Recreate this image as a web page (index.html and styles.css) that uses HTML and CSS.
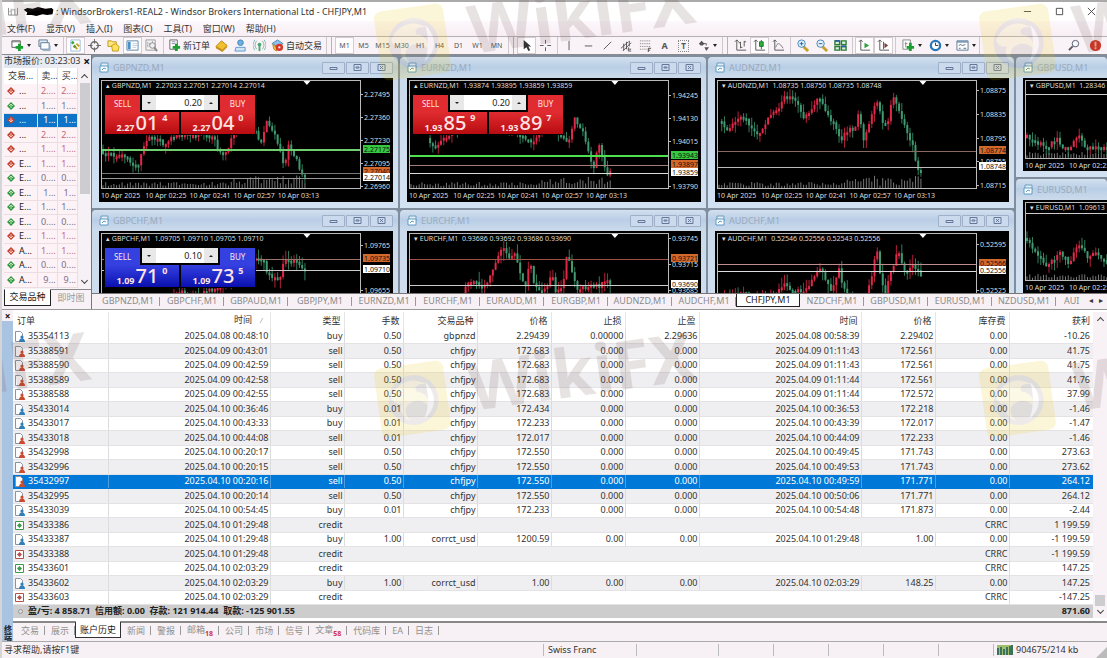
FILE: index.html
```html
<!DOCTYPE html>
<html lang="zh-CN">
<head>
<meta charset="utf-8">
<meta name="viewport" content="width=device-width, initial-scale=1">
<title>WindsorBrokers1-REAL2 - Windsor Brokers International Ltd - CHFJPY,M1</title>
<link rel="stylesheet" href="styles.css">
</head>
<body>
<div class="app">
  <header class="titlebar">
    <svg class="app-logo" viewBox="0 0 12 10" aria-hidden="true"><path d="M1 1v8h10V1M4 2v7M8 2v7M2 5h1M6 2v2" fill="none" stroke="#888"/></svg>
    <svg class="redacted" viewBox="0 0 34 10" aria-hidden="true"><path d="M0 3 4 1 10 2 16 0 24 2 31 1 33 3 32 8 26 9 21 8 14 10 9 9 3 9 4 6Z"/></svg>
    <h1 class="app-title">: WindsorBrokers1-REAL2 - Windsor Brokers International Ltd - CHFJPY,M1</h1>
    <div class="caption-buttons">
      <button aria-label="最小化"><svg viewBox="0 0 10 10"><path d="M1 5h8"/></svg></button>
      <button aria-label="最大化"><svg viewBox="0 0 10 10"><path d="M1.5 1.5h7v7h-7z"/></svg></button>
      <button aria-label="关闭"><svg viewBox="0 0 10 10"><path d="M1 1l8 8M9 1l-8 8"/></svg></button>
    </div>
  </header>

  <nav class="menubar">
    <button>文件(F)</button><button>显示(V)</button><button>插入(I)</button><button>图表(C)</button><button>工具(T)</button><button>窗口(W)</button><button>帮助(H)</button>
  </nav>

  <div class="toolbar">
    <div class="tools">
      <button class="tool has-menu" aria-label="新图表"><svg viewBox="0 0 14 14"><path d="M1 2h9v7H1z" fill="#fff" stroke="#555"/><path d="M1 3h9" stroke="#777"/><path d="M9 5v8M5 9h8" stroke="#18a030" stroke-width="3"/></svg></button>
      <button class="tool has-menu" aria-label="配置文件"><svg viewBox="0 0 14 14"><path d="M1 1h9v7H1z" fill="#dcebf5" stroke="#678"/><path d="M3 4h9v7H3z" fill="#fff" stroke="#579"/><path d="M5 12.500h8V7" fill="none" stroke="#8ab"/></svg></button>
    </div>
    <div class="tools">
      <button class="tool pressed" aria-label="市场报价"><svg viewBox="0 0 14 14"><path d="M2 1h10v12H2z" fill="#fff" stroke="#9bd"/><path d="M4 2l2 2-2 2-2-2z" fill="#38a545"/><path d="M8 5l3 3M9 11l-3-3" stroke="#c79c20" stroke-width="2"/><path d="M6 6l2 2-2 2-2-2z" fill="#5a9a30"/></svg></button>
      <button class="tool" aria-label="数据窗口"><svg viewBox="0 0 14 14"><circle cx="7" cy="7" r="4" fill="none" stroke="#666" stroke-width="1.500"/><path d="M7 0v5M7 9v5M0 7h5M9 7h5" stroke="#666"/></svg></button>
      <button class="tool" aria-label="导航"><svg viewBox="0 0 14 14"><path d="M1 2h4l1 1h4v5H1z" fill="#ffe680" stroke="#c09a18"/><path d="M5 7l4-2 4 3-1 5H6z" fill="#ffe25a" stroke="#c09a18"/></svg></button>
      <button class="tool pressed" aria-label="终端"><svg viewBox="0 0 14 14"><path d="M1 2h12v10H1z" fill="#fff" stroke="#5b84a8"/><path d="M2 3h3v8H2z" fill="#4a90c8"/><path d="M7 5h5M7 7h5M7 9h4" stroke="#bcd"/></svg></button>
      <button class="tool" aria-label="策略测试"><svg viewBox="0 0 14 14"><path d="M1 1h10v11H1z" fill="#f5f5f5" stroke="#999"/><path d="M3 3v6M5 4v4M8 2v3" stroke="#aaa"/><circle cx="8" cy="7" r="3" fill="#eee" stroke="#888"/><path d="M10 9l3 4" stroke="#888" stroke-width="2"/></svg></button>
    </div>
    <div class="tools">
      <button class="tool labelled order"><svg viewBox="0 0 14 14"><path d="M2 1h8v10H2z" fill="#fff" stroke="#666"/><path d="M4 3h4M4 5h4" stroke="#88a"/><path d="M9 5v8M5 9h8" stroke="#18a030" stroke-width="3"/></svg>新订单</button>
      <button class="tool" aria-label="MetaEditor"><svg viewBox="0 0 14 14"><path d="M1 8l6-6 6 5-5 5z" fill="#f0c030" stroke="#b98510"/><path d="M1 8v2l7 4 5-5V7l-5 5z" fill="#c98d18"/></svg></button>
      <button class="tool" aria-label="选项"><svg viewBox="0 0 14 14"><circle cx="7" cy="4" r="3" fill="#6fb1e0" stroke="#3c7fb5"/><path d="M2 9h10v4H1z" fill="#cfe4f4" stroke="#5b9bcc"/></svg></button>
      <button class="tool" aria-label="信号"><svg viewBox="0 0 14 14"><path d="M4 2a7 7 0 0 0 0 9M10 2a7 7 0 0 1 0 9M2 1a9 9 0 0 0 0 11M12 1a9 9 0 0 1 0 11" fill="none" stroke="#7db5ae"/><circle cx="7" cy="6" r="2" fill="#4aa870"/><path d="M7 7v6" stroke="#4aa870" stroke-width="2"/></svg></button>
      <button class="tool labelled auto"><svg viewBox="0 0 14 14"><path d="M1 5l6-4 6 4-6 3z" fill="#8ec1e8" stroke="#4a86b5"/><path d="M2 6l4 3v4l-3-2z" fill="#f0c04a" stroke="#b98a20"/><circle cx="9" cy="9" r="4" fill="#d8382c"/><path d="M8 8h2v2H8z" fill="#fff"/></svg>自动交易</button>
    </div>
    <div class="tools double periods">
      <button class="tool pressed">M1</button><button class="tool">M5</button><button class="tool">M15</button><button class="tool">M30</button><button class="tool">H1</button><button class="tool">H4</button><button class="tool">D1</button><button class="tool">W1</button><button class="tool">MN</button>
    </div>
    <div class="tools double">
      <button class="tool pressed" aria-label="光标"><svg viewBox="0 0 14 14"><path d="M4 1v10l3-2 2 4 2-1-2-4h3z" fill="#333"/></svg></button>
      <button class="tool" aria-label="十字线"><svg viewBox="0 0 14 14"><path d="M7 1v4M7 9v4M1 7h4M9 7h4" stroke="#555"/></svg></button>
    </div>
    <div class="tools">
      <button class="tool" aria-label="垂直线"><svg viewBox="0 0 14 14"><path d="M6.500 2v10" stroke="#555"/></svg></button>
      <button class="tool" aria-label="水平线"><svg viewBox="0 0 14 14"><path d="M3 7.500h8" stroke="#555"/></svg></button>
      <button class="tool" aria-label="趋势线"><svg viewBox="0 0 14 14"><path d="M3 11l8-8" stroke="#555"/></svg></button>
      <button class="tool" aria-label="通道"><svg viewBox="0 0 14 14"><path d="M1 10l8-7M3 13l9-9M4 5v7M7 3v8M10 2v6M9 11h3M9 13h3M9 9v4" stroke="#555" fill="none"/></svg></button>
      <button class="tool" aria-label="斐波纳契"><svg viewBox="0 0 14 14"><path d="M1 2h12M1 5h12M1 8h12M1 11h7" stroke="#777" stroke-dasharray="1 1"/><path d="M10 10v4M10 10h3M10 12h2" stroke="#444"/></svg></button>
      <button class="tool glyph" aria-label="文字">A</button>
      <button class="tool glyph boxed" aria-label="文字标签"><span>T</span></button>
      <button class="tool has-menu" aria-label="箭头"><svg viewBox="0 0 14 14"><path d="M2 5l3-3 3 3-2 2H4zM8 9l2 4 3-4z" fill="#555"/><path d="M7 5h3v2" stroke="#555" fill="none"/></svg></button>
    </div>
    <div class="tools double">
      <button class="tool" aria-label="柱状图"><svg viewBox="0 0 14 14"><path d="M3 1v11h10M1 3l2-2 2 2M7 3v7M7 4H5M7 9h2M11 2v6M11 3h2" fill="none" stroke="#555"/></svg></button>
      <button class="tool pressed" aria-label="蜡烛图"><svg viewBox="0 0 14 14"><path d="M3 1v11h10M1 3l2-2 2 2M9 1v10" fill="none" stroke="#555"/><path d="M7 3h4v5H7z" fill="#2fae3f" stroke="#1a7a28"/></svg></button>
      <button class="tool" aria-label="折线图"><svg viewBox="0 0 14 14"><path d="M3 1v11h10M1 3l2-2 2 2" fill="none" stroke="#555"/><path d="M4 9c2-6 4-5 8 1" fill="none" stroke="#777"/></svg></button>
    </div>
    <div class="tools">
      <button class="tool" aria-label="放大"><svg viewBox="0 0 14 14"><path d="M8 8l5 5" stroke="#c8a028" stroke-width="3"/><circle cx="6" cy="5" r="4" fill="#e2f1fb" stroke="#4284b8"/><path d="M4 5h4M6 3v4" stroke="#28659a"/></svg></button>
      <button class="tool" aria-label="缩小"><svg viewBox="0 0 14 14"><path d="M8 8l5 5" stroke="#c8a028" stroke-width="3"/><circle cx="6" cy="5" r="4" fill="#e2f1fb" stroke="#4284b8"/><path d="M4 5h4" stroke="#28659a"/></svg></button>
      <button class="tool" aria-label="平铺窗口"><svg viewBox="0 0 14 14"><path d="M1 2h5v4H1zM8 2h5v4H8zM1 8h5v4H1zM8 8h5v4H8z" fill="#d8f0d8" stroke="#2c7a38" stroke-width="1.500"/><path d="M1 2h5M8 8h5" stroke="#2560a0" stroke-width="2"/></svg></button>
    </div>
    <div class="tools">
      <button class="tool pressed" aria-label="自动滚动"><svg viewBox="0 0 14 14"><path d="M3 1v11h10M1 3l2-2 2 2" fill="none" stroke="#555"/><path d="M7 4l5 3-5 3z" fill="#2ea043"/></svg></button>
      <button class="tool pressed" aria-label="图表平移"><svg viewBox="0 0 14 14"><path d="M3 1v11h10M1 3l2-2 2 2M7 3v8" fill="none" stroke="#555"/><path d="M8 4l4 3-4 3z" fill="#7a4040"/></svg></button>
    </div>
    <div class="tools last">
      <button class="tool has-menu" aria-label="指标"><svg viewBox="0 0 14 14"><path d="M1 1h8v10H1z" fill="#fff" stroke="#888"/><path d="M4 3v6M3 5h3" stroke="#888"/><path d="M9 4v9M5 9h8" stroke="#18a030" stroke-width="3"/></svg></button>
      <button class="tool has-menu" aria-label="时间周期"><svg viewBox="0 0 14 14"><circle cx="7" cy="7" r="5" fill="#fff" stroke="#2a78b8" stroke-width="2.500"/><path d="M7 4v3h3" fill="none" stroke="#333"/></svg></button>
      <button class="tool has-menu" aria-label="模板"><svg viewBox="0 0 14 14"><path d="M1 2h12v10H1z" fill="#fff" stroke="#5b7b96"/><path d="M1 3h12" stroke="#7a9cba" stroke-width="2"/><path d="M3 7l2-1 2 1 3-1M3 10h2M8 10h3" fill="none" stroke="#567"/></svg></button>
    </div>
    <div class="tools corner">
      <button class="tool" aria-label="搜索"><svg viewBox="0 0 14 14"><circle cx="8" cy="5" r="3.500" fill="#f4f8ff" stroke="#556"/><path d="M5 8l-4 4" stroke="#556" stroke-width="2"/></svg></button>
      <button class="tool" aria-label="通知"><svg viewBox="0 0 14 14"><circle cx="7" cy="7" r="6" fill="#d63420"/><path d="M7 3v5M7 9v2" stroke="#ffb0a0" stroke-width="2"/></svg></button>
    </div>
  </div>

  <main class="upper">
    <section class="market">
      <header class="market-head"><h2>市场报价: 03:23:03</h2><button class="close" aria-label="关闭">×</button></header>
      <div class="market-body">
        <table class="quotes">
          <thead><tr><th>交易...</th><th>卖...</th><th>买...</th></tr></thead>
          <tbody id="quotes"></tbody>
        </table>
        <div class="scroll"><span class="up"></span><span class="thumb long"></span><span class="down"></span></div>
      </div>
      <div class="market-tabs"><button class="active">交易品种</button><button>即时图</button></div>
    </section>

    <section class="charts">
      <div class="workspace" id="workspace"></div>
      <div class="chart-tabs" id="chart-tabs"></div>
    </section>
  </main>

  <section class="terminal">
    <div class="terminal-side"><button class="close" aria-label="关闭">×</button><span class="side-name">终端</span></div>
    <div class="terminal-main">
      <div class="history-wrap">
        <table class="history">
          <colgroup><col class="c-order"><col class="c-time"><col class="c-price"><col class="c-lots"><col class="c-price"><col class="c-price"><col class="c-price"><col class="c-price"><col class="c-time"><col class="c-price"><col class="c-price"><col class="c-profit"></colgroup>
          <thead><tr><th>订单</th><th class="sorted">时间<i>/</i></th><th>类型</th><th>手数</th><th>交易品种</th><th>价格</th><th>止损</th><th>止盈</th><th>时间</th><th>价格</th><th>库存费</th><th>获利</th></tr></thead>
          <tbody id="history"></tbody>
          <tfoot><tr><td colspan="11"><span class="bullet"></span>盈/亏: 4 858.71&nbsp; 信用额: 0.00&nbsp; 存款: 121 914.44&nbsp; 取款: -125 901.55</td><td>871.60</td></tr></tfoot>
        </table>
        <div class="scroll"><span class="up"></span><span class="track"></span><span class="thumb"></span><span class="down"></span></div>
      </div>
      <div class="terminal-tabs">
        <button>交易</button><button>展示</button><button class="active">账户历史</button><button>新闻</button><button>警报</button><button>邮箱<sub>18</sub></button><button>公司</button><button>市场</button><button>信号</button><button>文章<sub>58</sub></button><button>代码库</button><button>EA</button><button>日志</button>
      </div>
    </div>
  </section>

  <footer class="status">
    <span class="help">寻求帮助,请按F1键</span><span class="profile">Swiss Franc</span><span class="date"></span><span></span><span></span><span></span><span></span><span></span>
    <span class="traffic"><svg viewBox="0 0 16 10" aria-hidden="true"><path d="M0 0h16v10H0z" fill="#9fbf6a"/><path d="M1 3v7M4 2v8M7 4v6M10 2v8M13 1v9M15 0v10" stroke="#1d5a58" stroke-width="1.500"/></svg>904675/214 kb</span>
    <svg class="grip" viewBox="0 0 12 12" aria-hidden="true"><path d="M12 0v12H0z" fill="#bbb"/></svg>
  </footer>

  <div class="watermarks" id="watermarks" aria-hidden="true"></div>
</div>
<script src="app.js"></script>
</body>
</html>
```

FILE: styles.css
```css
* { box-sizing: border-box; }

body {
  margin: 0;
  font: 9px/12px "Noto Sans", "Noto Sans CJK SC", sans-serif;
  color: #333;
  background: #f7f0f4;
}

button, input {
  font: inherit;
  color: inherit;
  margin: 0;
  padding: 0;
  border: 0;
  background: none;
}

h1, h2 { margin: 0; font: inherit; }
svg { display: block; }

.app {
  position: relative;
  display: flex;
  flex-direction: column;
  height: 100vh;
  min-height: 600px;
  overflow: hidden;
  border-left: 2px solid #d5d5d8;
}

/* Title bar and menu */
.titlebar {
  display: flex;
  align-items: center;
  height: 21px;
  padding-left: 5px;
  border-top: 2px solid #aaa;
  background: #fff;
}
.app-logo { width: 12px; height: 9px; }
.redacted { width: 34px; height: 9px; margin-left: 3px; }
.app-title { color: #333; white-space: nowrap; }
.caption-buttons { display: flex; margin-left: auto; }
.caption-buttons button { width: 32px; height: 16px; display: grid; place-items: center; }
.caption-buttons svg { width: 9px; height: 9px; fill: none; stroke: #444; }

.menubar {
  display: flex;
  gap: 11px;
  height: 15px;
  padding-left: 5px;
  background: linear-gradient(#fdf8fb, #f7eef3);
  color: #333;
}

/* Toolbar */
.toolbar {
  display: flex;
  height: 19px;
  padding-left: 5px;
  border-top: 1px solid #b5b0b4;
  border-bottom: 1px solid #8a8a8e;
  background: #f9f2f6;
}
.tools { display: flex; align-items: center; padding-right: 2px; margin-right: 2px; border-right: 1px solid #cfc8cc; }
.tools.double { padding-left: 3px; margin-left: 2px; border-left: 1px solid #b9b2b6; }
.tools.last { padding-right: 0; }
.tools.corner { margin: 0 2px 0 auto; border: 0; padding: 0; gap: 2px; }
.tool { display: flex; align-items: center; justify-content: center; width: 19px; height: 17px; white-space: nowrap; }
.tool svg { width: 13px; height: 13px; }
.tool.pressed { border: 1px solid #d4ccd2; background: #fffcfe; }
.tool.has-menu { width: 27px; gap: 3px; }
.tool.has-menu::after { content: ""; border: 2px solid transparent; border-top: 3px solid #222; border-bottom: 0; }
.tool.labelled { gap: 2px; }
.tool.order { width: 46px; }
.tool.auto { width: 55px; }
.periods .tool { font-size: 7px; color: #555; }
.tool.glyph { font-weight: 700; color: #555; }
.tool.boxed span { border: 1px dotted #888; width: 11px; line-height: 10px; font-size: 8px; }

/* Market watch */
.upper { display: flex; flex: 1; min-height: 0; }
.market {
  display: flex;
  flex-direction: column;
  width: 90px;
  padding-left: 2px;
  border-right: 1px solid #777;
  background: #f8f2f6;
}
.market-head { display: flex; justify-content: space-between; height: 13px; white-space: nowrap; background: linear-gradient(90deg, #dfe6f0, #f3f0f5); }
.close { font-size: 12px; line-height: 12px; font-weight: 700; padding: 0 1px; color: #111; }
.market-body { display: flex; background: #fdf2f6; }
.quotes { flex: 1; table-layout: fixed; width: 74px; border-collapse: collapse; }
.quotes th { height: 16px; padding: 0 0 0 4px; font-weight: 400; text-align: left; background: #fff; border-right: 1px solid #e2dde0; overflow: hidden; white-space: nowrap; }
.quotes th:first-child { width: 33px; }
.quotes td { padding: 0 1px 0 0; height: 14px; line-height: 12px; text-align: right; white-space: nowrap; border-right: 1px solid #ecdde3; border-bottom: 1px solid #ecdde3; color: #77708a; }
.quotes tr:nth-child(even) td { height: 15px; }
.quotes td:first-child { text-align: left; color: #222; padding-left: 3px; }
.quotes td svg { display: inline-block; width: 8px; height: 8px; margin-right: 4px; vertical-align: -1px; }
.quotes .down td { color: #c4657a; }
.quotes .down td:first-child { color: #222; }
.quotes tr.selected td, .quotes tr.selected td:first-child { color: #fff; background: #0f74c8; }
.scroll { display: flex; flex-direction: column; align-items: center; width: 13px; background: #f6f1f4; }
.scroll .up, .scroll .down { width: 5px; height: 5px; border: 1px solid #444; border-width: 1px 0 0 1px; transform: rotate(45deg); margin: 7px 0 3px; flex: none; }
.scroll .down { transform: rotate(225deg); margin: 2px 0 5px; }
.scroll .thumb { width: 10px; height: 11px; background: #cdcdcf; }
.scroll .thumb.long { flex: 1; margin-bottom: 94px; }
.market-body .scroll { position: relative; }
.market-body .scroll .down { position: absolute; bottom: 0; }
.market-tabs { display: flex; height: 17px; border-top: 1px solid #888; margin-top: 1px; }
.market-tabs button { flex: 1; color: #999; }
.market-tabs .active { flex: none; width: 47px; margin-top: -1px; color: #222; background: #fff; border: 1px solid #222; border-top-color: #fff; }

/* Chart workspace */
.charts { display: flex; flex-direction: column; flex: 1; min-width: 0; }
.workspace {
  flex: 1;
  min-height: 0;
  overflow: hidden;
  display: grid;
  grid-template-columns: repeat(3, minmax(0, 306fr)) minmax(0, 91fr);
  gap: 2px;
  padding-top: 2px;
  align-content: start;
  align-items: start;
  background: #7f8d9c;
}
.col { display: flex; flex-direction: column; gap: 2px; }
.win {
  padding: 0 5px 6px 7px;
  border-radius: 4px 4px 0 0;
  background: linear-gradient(#d3e0ef, #b9cee6 10px, #cadaeb 20px, #d3e2f2);
}
.win-head { display: flex; align-items: center; height: 21px; color: #9aa9bc; overflow: hidden; }
.win-head > svg { width: 11px; height: 11px; margin-right: 3px; flex: none; }
.win-head h3 { margin: 0; font: inherit; white-space: nowrap; }
.win-head div { display: flex; gap: 1px; margin-left: auto; }
.win-head button { width: 23px; height: 12px; display: grid; place-items: center; border: 1px solid #9fb0c8; border-radius: 1px; background: #cbdaec; }
.win-head button svg { width: 9px; height: 7px; fill: none; stroke: #66789a; }
.screen { display: grid; grid-template-columns: minmax(0, 1fr) 32px; height: 124px; padding: 2px 0 0 2px; background: #000; color: #ddd; font-size: 7px; line-height: 10px; overflow: hidden; }
.narrow .screen { grid-template-columns: minmax(0, 1fr); height: 93px; }
.narrow .win { padding-right: 0; }
.plot { position: relative; height: 109px; border: 1px solid #bbb; overflow: hidden; }
.narrow .plot { height: 79px; border-right: 0; }
.plot > svg { width: 100%; height: 100%; }
.narrow .plot > svg { width: 260px; }
.axis { width: 32px; height: 109px; overflow: visible; }
.axis text { font-size: 7px; fill: #ddd; }
.axis .on { fill: #111; }
.times { display: flex; height: 13px; padding-top: 2px; overflow: hidden; }
.times span { flex: 0 0 17%; white-space: nowrap; }
.narrow .times span { flex: 0 0 44px; }
.ohlc { position: absolute; left: 4px; top: 0; white-space: pre; }

/* One-click trading panel laid over the plot */
.deal { position: absolute; left: 2px; top: 13px; width: 152px; padding: 1px; background: #000; color: #ffe4e4; }
.deal-top { display: flex; height: 17px; }
.deal-top > button { flex: none; width: 35px; font-size: 8px; background: var(--hi); }
.stepper { display: flex; flex: 1; min-width: 0; height: 15px; margin: 0 2px; background: #fff; color: #222; }
.stepper button { flex: none; width: 14px; background: #e8e8e8; display: grid; place-items: center; }
.stepper button::after { content: ""; border: 2px solid transparent; border-top: 2px solid #222; border-bottom: 0; }
.stepper button:last-child::after { transform: rotate(180deg); }
.stepper input { flex: 1; width: 0; min-width: 0; text-align: right; font-size: 9px; padding-right: 2px; }
.deal-bottom { display: flex; gap: 2px; }
.deal-bottom button { flex: 1; height: 22px; display: flex; align-items: flex-end; justify-content: center; gap: 1px; font-weight: 700; font-size: 9px; line-height: 12px; background: linear-gradient(var(--hi), var(--lo)); }
.deal-bottom b { font-size: 20px; line-height: 22px; font-weight: 500; }
.deal-bottom sup { align-self: flex-start; font-size: 9px; line-height: 11px; margin-left: 3px; }
.deal.red { --hi: #e02c30; --lo: #b80c10; }
.deal.blue { --hi: #3540e0; --lo: #0a10b0; }

.chart-tabs { display: flex; height: 16px; padding: 0 26px 0 4px; border-top: 1px solid #777; background: #f7f1f5; position: relative; }
.chart-tabs button { flex: 0 0 64px; height: 13px; color: #8b8b8b; white-space: nowrap; overflow: hidden; background: linear-gradient(#999, #999) right 3px / 1px 9px no-repeat; }
.chart-tabs .active { color: #222; background: #fff; border: 1px solid #222; border-top: 0; }
.chart-tabs button:last-of-type { flex: 1 1 0; text-align: left; padding-left: 8px; background: none; }
.chart-tabs span { position: absolute; right: 4px; top: 0; color: #333; font-size: 8px; word-spacing: 4px; }

/* Terminal */
.terminal { display: flex; border-top: 1px solid #999; background: #fff; }
.terminal-side { display: flex; flex-direction: column; justify-content: space-between; align-items: center; width: 11px; background: linear-gradient(#f7f0f4 11px, #a9c3e3 11px); }
.terminal-side .close { padding: 0; font-size: 10px; }
.side-name { writing-mode: vertical-rl; font-size: 8px; line-height: 10px; color: #123; font-weight: 700; }
.terminal-main { flex: 1; min-width: 0; }
.history-wrap { display: flex; padding-top: 2px; }
.history { flex: 1; width: 100%; table-layout: fixed; border-collapse: collapse; }
.c-order { width: 95px; }
.c-time { width: 162px; }
.c-price { width: 74px; }
.c-lots { width: 59px; }
.c-profit { width: 84px; }
.history th { height: 17px; padding: 0 3px 0 0; font-weight: 400; text-align: right; border-right: 1px solid #e6e6e6; }
.history th:first-child { text-align: left; padding-left: 4px; }
.history th i { margin: 0 4px 0 8px; color: #999; font-size: 7px; }
.history td { height: 14px; padding: 0 1px 0 0; line-height: 12px; text-align: right; white-space: nowrap; border-right: 1px solid #dcdcdc; border-bottom: 1px solid #e4e2e4; }
.history tbody td:last-child, .history th:last-child { border-right: 0; padding-right: 3px; }
.history td:first-child { text-align: left; padding-left: 2px; }
.history tbody tr:nth-child(even) td { height: 15px; background: #efeef0; }
.history .credit td:nth-child(n+3):nth-child(-n+10) { border-right-color: transparent; }
.history td svg { display: inline-block; width: 10px; height: 11px; margin-right: 3px; vertical-align: -3px; }
.history tbody tr.selected td { background: #0078d7; color: #fff; border-bottom-color: #0078d7; border-right-color: #4ba0e4; }
.history tfoot td { background: #cdcdcd; border: 0; font-weight: 700; color: #222; padding-right: 3px; }
.history tfoot td:first-child { padding-left: 5px; }
.bullet { display: inline-block; width: 5px; height: 5px; margin-right: 5px; border: 1px solid #999; border-radius: 50%; background: #ddd; }
.history-wrap .scroll { width: 15px; background: #f8f2f6; }
.history-wrap .scroll .up { margin-top: 6px; }
.history-wrap .track { flex: 1; }
.terminal-tabs { display: flex; height: 20px; margin-top: 3px; border-top: 2px solid #888; background: #f7f0f4; padding-left: 2px; }
.terminal-tabs button { padding: 0 6px; height: 15px; color: #909090; background: linear-gradient(#999, #999) right 3px / 1px 9px no-repeat; }
.terminal-tabs .active { margin-top: -2px; height: 17px; color: #222; background: #fff; border: 1px solid #333; border-top-color: #fff; padding: 0 4px; }
.terminal-tabs sub { font-size: 7px; line-height: 7px; font-weight: 700; color: #d03048; }

/* Status bar */
.status { display: flex; align-items: center; height: 17px; padding-left: 2px; border-top: 1px solid #aaa; background: #f7f0f4; }
.status > span { flex: 0 0 55px; height: 12px; border-right: 1px solid #bbb; white-space: nowrap; }
.status .help { flex: 1; }
.status .profile { flex-basis: 93px; padding-left: 4px; }
.status .date { flex-basis: 82px; }
.status .traffic { display: flex; align-items: center; gap: 3px; flex-basis: 102px; padding-left: 3px; border: 0; }
.traffic svg { width: 16px; height: 10px; }
.grip { width: 11px; height: 11px; align-self: flex-end; }

/* Brand watermark repeated across the window */
.watermarks { position: absolute; inset: 0; overflow: hidden; pointer-events: none; }
.mark { position: absolute; display: flex; align-items: center; gap: 22px; transform: rotate(-8deg); transform-origin: left center; opacity: .15; font: 700 67px/80px "Noto Sans", sans-serif; color: #6b4a4a; }
.mark svg { width: 70px; height: 70px; margin-top: 12px; }
```

FILE: app.js
```js
const $ = (id) => document.getElementById(id);

/* ---- Market watch ---- */
const quotes = [
  ["down", "...", "2....", "2...."], ["up", "...", "1....", "1...."], ["down selected", "...", "1...", "1..."],
  ["down", "...", "2....", "2...."], ["down", "...", "1....", "1...."], ["down", "E...", "1....", "1...."],
  ["up", "E...", "0....", "0...."], ["up", "E...", "1...", "1..."], ["up", "E...", "1....", "1...."],
  ["up", "E...", "0....", "0...."], ["down", "E...", "1....", "1...."], ["down", "A...", "1....", "1...."],
  ["up", "A...", "0....", "0...."], ["up", "A...", "9...", "9..."]
];
$("quotes").innerHTML = quotes.map(([state, name, bid, ask]) => {
  const down = state.startsWith("down");
  const icon = `<svg viewBox="0 0 8 8"><path d="M4 0l4 4-4 4-4-4z" fill="${down ? "#c8402c" : "#2f9a3c"}"/><path d="${down ? "M4 2v3M2 4l2 2 2-2" : "M4 6V3M2 4l2-2 2 2"}" stroke="#fff" stroke-width=".7" fill="none"/></svg>`;
  return `<tr class="${state}"><td>${icon}${name}</td><td>${bid}</td><td>${ask}</td></tr>`;
}).join("");

/* ---- Charts ---- */
const O = "#d2692a", W = "#ffffff", G = "#35c840";
const charts = [
  { name: "GBPNZD,M1", ohlc: "2.27023 2.27051 2.27014 2.27014", open: true, seed: 3,
    path: [1,70,16,75,24,75,27,82,37,82,42,63,51,55,62,63,72,55,99,52,111,55,119,72,126,72,131,53,146,42,156,52,161,65,166,38,176,57,182,82,184,88,188,63,196,78,201,92,205,94],
    lines: [[69, "#6fcf6f", 2], [92, "#777", 1], [97, "#999", 1]],
    axis: [["2.27495", 14], ["2.27360", 37], ["2.27230", 60], ["2.27095", 83], ["2.26960", 106], ["2.27175", 69, G], ["2.27040", 91, O], ["2.27014", 97, W]],
    deal: ["red", "0.20", "2.27", "01", "4", "2.27", "04", "0"] },
  { name: "EURNZD,M1", ohlc: "1.93874 1.93895 1.93859 1.93859", open: true, seed: 8,
    path: [18,57,24,67,29,63,36,55,60,40,100,48,116,57,124,63,128,55,138,45,156,57,159,63,166,37,174,52,181,72,184,92,190,63,195,82,199,92,204,90],
    lines: [[75, "#4fe04f", 2], [84, "#a08078", 1], [92, "#ddd", 1]],
    axis: [["1.94245", 15], ["1.94130", 38], ["1.94015", 61], ["1.93790", 106], ["1.93943", 75, G], ["1.93897", 84, O], ["1.93859", 92, W]],
    deal: ["red", "0.20", "1.93", "85", "9", "1.93", "89", "7"] },
  { name: "AUDNZD,M1", ohlc: "1.08735 1.08750 1.08735 1.08748", seed: 5, tall: 8,
    path: [2,40,9,48,22,37,29,40,41,57,49,38,59,30,67,17,74,17,81,22,87,38,94,30,101,15,107,27,116,42,124,58,134,45,137,55,142,32,147,62,154,35,161,18,166,40,171,42,176,15,182,30,191,52,196,65,200,87,202,92,206,88],
    lines: [[70, "#8a6a60", 1], [86, "#bbb", 1]],
    axis: [["1.08875", 10], ["1.08835", 34], ["1.08795", 58], ["1.08755", 81], ["1.08715", 105], ["1.08774", 70, O], ["1.08748", 86, W]] },
  { name: "GBPCHF,M1", ohlc: "1.09705 1.09710 1.09705 1.09710", open: true, seed: 9, tall: 10, cut: true,
    path: [70,64,79,57,88,66,140,40,156,23,162,23,166,39,172,43,181,41,184,21,189,28,196,26,201,34,205,37],
    lines: [[25, "#a07468", 1], [36, "#ccc", 1]],
    axis: [["1.09765", 12], ["1.09655", 57], ["1.09735", 25, O], ["1.09710", 36, W]],
    deal: ["blue", "0.10", "1.09", "71", "0", "1.09", "73", "5"] },
  { name: "EURCHF,M1", ohlc: "0.93686 0.93692 0.93686 0.93690", seed: 4, tall: 10, cut: true,
    path: [54,62,58,46,63,46,71,54,81,43,88,26,94,13,99,26,106,19,111,38,116,53,121,29,126,53,131,58,139,54,143,34,146,58,154,53,158,21,163,36,168,58,183,49,191,54,198,43,204,53],
    lines: [[25, "#a05048", 1], [51, "#ccc", 1]],
    axis: [["0.93745", 5], ["0.93715", 31], ["0.93685", 57], ["0.93721", 25, O], ["0.93690", 51, W]] },
  { name: "AUDCHF,M1", ohlc: "0.52546 0.52556 0.52543 0.52556", seed: 7, tall: 10, cut: true,
    path: [6,66,26,56,31,66,59,61,66,49,76,59,89,54,96,43,102,33,109,48,114,56,122,36,127,56,132,66,149,66,154,46,160,16,164,43,168,63,172,46,182,16,189,43,196,29,205,41],
    lines: [[30, "#c09090", 1], [37, "#ddd", 1]],
    axis: [["0.52595", 11], ["0.52525", 57], ["0.52566", 30, O], ["0.52556", 37, W]] },
  { name: "GBPUSD,M1", ohlc: "1.28346", seed: 2, height: 77, tall: 8,
    path: [1,55,21,67,31,58,41,70,54,55,61,70,68,63,81,67], lines: [[13, "#ccc", 1]], axis: [] },
  { name: "EURUSD,M1", ohlc: "1.09613", seed: 6, height: 77, tall: 8,
    path: [1,35,11,50,21,65,34,48,43,60,54,40,61,55,69,48,81,60], lines: [[10, "#ccc", 1]], axis: [] }
];

function randomFrom(seed) {
  let s = seed * 7919;
  return () => (s = (s * 16807) % 2147483647) / 2147483647;
}

function priceAt(path, x) {
  for (let i = 2; i < path.length; i += 2) {
    if (x <= path[i]) {
      const t = (x - path[i - 2]) / (path[i] - path[i - 2]);
      return path[i - 1] + t * (path[i + 1] - path[i - 1]);
    }
  }
  return path[path.length - 1];
}

function drawPlot(c) {
  const h = c.height || 107, rnd = randomFrom(c.seed), step = 2.75;
  const end = c.path[c.path.length - 2];
  let out = "", prev = c.path[1];
  for (let x = 1; x <= end; x += step) {
    const volume = 2 + rnd() * 4 + (x > 130 ? rnd() * 7 : 0);
    if (!c.cut) out += `<path d="M${x} ${h}v${-volume}" stroke="#777"/>`;
    if (x < c.path[0]) continue;
    const y = priceAt(c.path, x) + (rnd() - 0.5) * 5;
    const color = y < prev ? "#e02848" : "#3f9a72";
    const top = Math.min(y, prev), size = Math.max(3, Math.abs(y - prev));
    const a = rnd() * (c.tall || 7), b = rnd() * (c.tall || 7);
    out += `<path d="M${x} ${top - a}v${size + a + b}" stroke="${color}" stroke-width=".8"/><path d="M${x} ${top}v${size}" stroke="${color}" stroke-width="2"/>`;
    prev = y;
  }
  c.lines.forEach(([y, color, w]) => { out += `<path d="M0 ${w === 1 ? y + 0.5 : y}h260" stroke="${color}" stroke-width="${w}"/>`; });
  return `<svg viewBox="0 0 260 ${h}" preserveAspectRatio="none">${out}<path d="M203 0h7l-3.500 4z" fill="#fff"/></svg>`;
}

function drawAxis(c) {
  return `<svg class="axis" viewBox="0 0 32 109">` + c.axis.map(([label, y, fill]) =>
    (fill ? `<rect x="2" y="${y - 4}" width="27" height="8" fill="${fill}"/>` : `<path d="M0 ${y}.500h2" stroke="#bbb"/>`) +
    `<text x="3" y="${y + 3}" class="${fill ? "on" : ""}">${label}</text>`).join("") + `</svg>`;
}

function dealPanel([tone, lots, a, b, c, d, e, f]) {
  return `<div class="deal ${tone}"><div class="deal-top"><button>SELL</button><div class="stepper"><button aria-label="减少"></button><input value="${lots}" aria-label="手数"><button aria-label="增加"></button></div><button>BUY</button></div>
  <div class="deal-bottom"><button>${a}<b>${b}</b><sup>${c}</sup></button><button>${d}<b>${e}</b><sup>${f}</sup></button></div></div>`;
}

function chartWindow(c, row) {
  const buttons = c.height ? "" : `<div><button aria-label="最小化"><svg viewBox="0 0 9 7"><path d="M1 3.500h7v2H1z"/></svg></button><button aria-label="最大化"><svg viewBox="0 0 9 7"><path d="M1 .5h7v6H1zM3 3h3v1H3z"/></svg></button><button aria-label="关闭"><svg viewBox="0 0 9 7"><path d="M1 .5h7v6H1zM3 2l3 3M6 2L3 5"/></svg></button></div>`;
  const count = c.cut ? 0 : c.height ? 2 : 5;
  const times = ["10 Apr 2025", "10 Apr 02:25", "10 Apr 02:41", "10 Apr 02:57", "10 Apr 03:13"].slice(0, count);
  return `<article class="win"><header class="win-head"><svg viewBox="0 0 11 11"><path d="M2 1h7v5H2z" fill="#e4eef8" stroke="#6d9cc0"/><path d="M1 4h8v6H1z" fill="#fff" stroke="#5b9cc4"/><path d="M3 8l2-2 2 1" stroke="#5b9cc4" fill="none"/></svg><h3>${c.name}</h3>${buttons}</header>
  <div class="screen"><div><div class="plot">${drawPlot(c)}<div class="ohlc">${c.open ? "▴" : "▾"} ${c.name}  ${c.ohlc}</div>${c.deal ? dealPanel(c.deal) : ""}</div><div class="times">${times.map((t) => `<span>${t}</span>`).join("")}</div></div>${c.axis.length ? drawAxis(c) : ""}</div></article>`;
}

$("workspace").innerHTML = [[0, 3], [1, 4], [2, 5], [6, 7]].map((group, i) =>
  `<div class="col${i === 3 ? " narrow" : ""}">${group.map((n) => chartWindow(charts[n])).join("")}</div>`).join("");

const tabs = "GBPNZD GBPCHF GBPAUD GBPJPY EURNZD EURCHF EURAUD EURGBP AUDNZD AUDCHF CHFJPY NZDCHF GBPUSD EURUSD NZDUSD AUDUSD".split(" ");
$("chart-tabs").innerHTML = tabs.map((t) => `<button${t === "CHFJPY" ? ' class="active"' : ""}>${t === "AUDUSD" ? "AUI" : t + ",M1"}</button>`).join("") + "<span>◂ ▸</span>";

/* ---- Account history ---- */
const history = `35354113|2025.04.08 00:48:10|buy|0.50|gbpnzd|2.29439|0.00000|2.29636|2025.04.08 00:58:39|2.29402|0.00|-10.26
35388591|2025.04.09 00:43:01|sell|0.50|chfjpy|172.683|0.000|0.000|2025.04.09 01:11:43|172.561|0.00|41.75
35388590|2025.04.09 00:42:59|sell|0.50|chfjpy|172.683|0.000|0.000|2025.04.09 01:11:43|172.561|0.00|41.75
35388589|2025.04.09 00:42:58|sell|0.50|chfjpy|172.683|0.000|0.000|2025.04.09 01:11:44|172.561|0.00|41.76
35388588|2025.04.09 00:42:55|sell|0.50|chfjpy|172.683|0.000|0.000|2025.04.09 01:11:44|172.572|0.00|37.99
35433014|2025.04.10 00:36:46|buy|0.01|chfjpy|172.434|0.000|0.000|2025.04.10 00:36:53|172.218|0.00|-1.46
35433017|2025.04.10 00:43:33|buy|0.01|chfjpy|172.233|0.000|0.000|2025.04.10 00:43:39|172.017|0.00|-1.47
35433018|2025.04.10 00:44:08|sell|0.01|chfjpy|172.017|0.000|0.000|2025.04.10 00:44:09|172.233|0.00|-1.46
35432998|2025.04.10 00:20:17|sell|0.50|chfjpy|172.550|0.000|0.000|2025.04.10 00:49:45|171.743|0.00|273.63
35432996|2025.04.10 00:20:15|sell|0.50|chfjpy|172.550|0.000|0.000|2025.04.10 00:49:53|171.743|0.00|273.62
35432997|2025.04.10 00:20:16|sell|0.50|chfjpy|172.550|0.000|0.000|2025.04.10 00:49:59|171.771|0.00|264.12
35432995|2025.04.10 00:20:14|sell|0.50|chfjpy|172.550|0.000|0.000|2025.04.10 00:50:06|171.771|0.00|264.12
35433039|2025.04.10 00:54:45|buy|0.01|chfjpy|172.233|0.000|0.000|2025.04.10 00:54:48|171.873|0.00|-2.44
35433386|2025.04.10 01:29:48|credit||||||||CRRC|1 199.59
35433387|2025.04.10 01:29:48|buy|1.00|corrct_usd|1200.59|0.00|0.00|2025.04.10 01:29:48|1.00|0.00|-1 199.59
35433388|2025.04.10 01:29:48|credit||||||||CRRC|-1 199.59
35433601|2025.04.10 02:03:29|credit||||||||CRRC|147.25
35433602|2025.04.10 02:03:29|buy|1.00|corrct_usd|1.00|0.00|0.00|2025.04.10 02:03:29|148.25|0.00|147.25
35433603|2025.04.10 02:03:29|credit||||||||CRRC|-147.25`.split("\n").map((line) => line.split("|"));

function orderIcon(row) {
  if (row[2] === "credit") {
    const color = row[11].startsWith("-") ? "#b8504a" : "#3d9a48";
    return `<svg viewBox="0 0 10 11"><path d="M.5 1.500h8v8h-8z" fill="#fff" stroke="${color}"/><path d="M4.500 3l2.500 2.500L4.500 8 2 5.500z" fill="${color}"/></svg>`;
  }
  const color = row[2] === "buy" ? "#2f7fb8" : "#cc4a30";
  return `<svg viewBox="0 0 10 11"><path d="M.5.5h5l2 2v8h-7z" fill="#fff" stroke="#8a93a0"/><circle cx="7" cy="6" r="1.600" fill="${color}"/><path d="M4 11c0-5 6-5 6 0z" fill="${color}"/></svg>`;
}

$("history").innerHTML = history.map((row) => {
  const cls = row[2] === "credit" ? "credit" : row[0] === "35432997" ? "selected" : "";
  return `<tr class="${cls}">${row.map((v, i) => `<td>${i ? "" : orderIcon(row)}${v}</td>`).join("")}</tr>`;
}).join("");

/* ---- Watermark ---- */
const emblem = `<svg viewBox="0 0 70 70"><rect width="70" height="70" rx="8" fill="#f0c800"/><circle cx="36" cy="36" r="25" fill="#8a7a70"/><path d="M14 30c8-14 24-18 36-8-8-2-12 1-10 6 8 2 12 8 10 16-4-6-10-8-16-6-8 2-10 10-4 18-8-4-10-12-6-18-6 0-9-3-10-8z" fill="#f0d860"/><path d="M50 20c10 12 8 28-6 36 6-10 8-22 6-36z" fill="#fff"/></svg>`;
$("watermarks").innerHTML = [[-230, 12], [375, 12], [980, 12], [-230, 369], [375, 369], [980, 369]].map(([x, y]) =>
  `<div class="mark" style="left:${x}px;top:${y - 12}px">${emblem}<span>WikiFX</span></div>`).join("");
```
